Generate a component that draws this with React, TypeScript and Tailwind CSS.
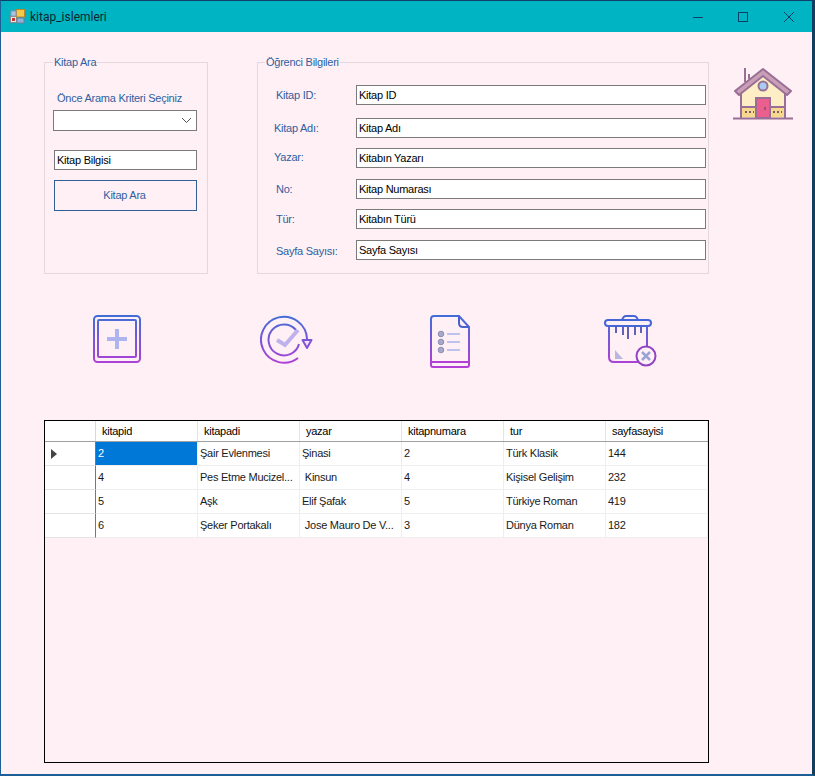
const columns = ['kitapid', 'kitapadi', 'yazar', 'kitapnumara', 'tur', 'sayfasayisi']

const rows = [
  ['2', 'Şair Evlenmesi', 'Şinasi', '2', 'Türk Klasik', '144'],
  ['4', 'Pes Etme Mucizel...', ' Kinsun', '4', 'Kişisel Gelişim', '232'],
  ['5', 'Aşk', 'Elif Şafak', '5', 'Türkiye Roman', '419'],
  ['6', 'Şeker Portakalı', ' Jose Mauro De V...', '3', 'Dünya Roman', '182'],
]

const fields = [
  { label: 'Kitap ID:', value: 'Kitap ID', labelClass: 'pl-[18px]', rowClass: 'mt-[16px]' },
  { label: 'Kitap Adı:', value: 'Kitap Adı', labelClass: 'pl-[16px]', rowClass: 'mt-[13px]' },
  { label: 'Yazar:', value: 'Kitabın Yazarı', labelClass: 'pl-[16px] mt-[-2px]', rowClass: 'mt-[10px]' },
  { label: 'No:', value: 'Kitap Numarası', labelClass: 'pl-[18px]', rowClass: 'mt-[11px]' },
  { label: 'Tür:', value: 'Kitabın Türü', labelClass: 'pl-[18px]', rowClass: 'mt-[10px]' },
  { label: 'Sayfa Sayısı:', value: 'Sayfa Sayısı', labelClass: 'pl-[18px] mt-[2px]', rowClass: 'mt-[11px]' },
]

function Gradient({ id }: { id: string }) {
  return (
    <linearGradient id={id} gradientUnits="userSpaceOnUse" x1="0" y1="0" x2="0" y2="50">
      <stop offset="0" stopColor="#3f6fd8" />
      <stop offset="1" stopColor="#b23fd6" />
    </linearGradient>
  )
}

function AppIcon() {
  return (
    <svg width="15" height="15" viewBox="0 0 15 15" className="shrink-0">
      <rect x="0.5" y="7.5" width="6" height="6" fill="#e8e8e8" stroke="#8a8a8a" />
      <rect x="2" y="9" width="3" height="3" fill="#c8332e" />
      <rect x="6.5" y="0.5" width="8" height="7.5" fill="#f7c948" stroke="#b8862b" />
      <rect x="7" y="9" width="7" height="5" fill="#8fb4dc" stroke="#6c7f96" />
      <rect x="1" y="2" width="5" height="5" fill="#a9c6e4" stroke="#8a9aa8" />
    </svg>
  )
}

function WindowButtons() {
  return (
    <div className="flex items-center">
      <svg width="12" height="12" viewBox="0 0 12 12" className="mr-[33px]">
        <path d="M1 6.500H11" stroke="#0d3f66" strokeWidth="1" />
      </svg>
      <svg width="12" height="12" viewBox="0 0 12 12" className="mr-[34px]">
        <rect x="1.500" y="1.500" width="9" height="9" fill="none" stroke="#0d3f66" />
      </svg>
      <svg width="12" height="12" viewBox="0 0 12 12" className="mr-[17px]">
        <path d="M1 1L11 11M11 1L1 11" stroke="#0d3f66" strokeWidth="1" />
      </svg>
    </div>
  )
}

function HouseIcon() {
  return (
    <svg width="60" height="54" viewBox="0 0 60 54" className="shrink-0">
      <path d="M12 16V2M16 13V8" stroke="#9a6f95" strokeWidth="2" />
      <path d="M8 22L30 4L52 22V52H8Z" fill="#fdeec6" />
      <path d="M8 42H52V51H8Z" fill="#f6d98c" />
      <path d="M2 25L30 3L58 25L54 29L30 10L6 29Z" fill="#c99fb8" stroke="#9a6f95" strokeWidth="2" strokeLinejoin="round" />
      <path d="M8 27V52M52 27V52M8 41H52" stroke="#9a6f95" strokeWidth="2" />
      <circle cx="30" cy="20" r="4.500" fill="#a9cdf0" stroke="#9a6f95" strokeWidth="2" />
      <rect x="23" y="32" width="14" height="20" fill="#ea5f8d" stroke="#9a6f95" strokeWidth="2" />
      <path d="M32 41V44" stroke="#8a4a6f" strokeWidth="1.500" />
      <path d="M12 46H14M16 46H18M20 46H21M40 46H42M44 46H46M48 46H49" stroke="#7a5a70" strokeWidth="2" />
      <path d="M0 52.500H60" stroke="#9a6f95" strokeWidth="2" />
    </svg>
  )
}

function AddIcon() {
  return (
    <svg width="48" height="48" viewBox="0 0 48 48" className="shrink-0">
      <defs><Gradient id="add" /></defs>
      <rect x="1" y="1" width="46" height="46" rx="3.500" fill="none" stroke="url(#add)" strokeWidth="2" />
      <rect x="5" y="5" width="38" height="37" rx="1" fill="none" stroke="url(#add)" strokeWidth="2" />
      <path d="M24 14V34M14 24H34" stroke="#aeb4ee" strokeWidth="4" />
    </svg>
  )
}

function UpdateIcon() {
  return (
    <svg width="54" height="50" viewBox="0 0 54 50" className="shrink-0">
      <defs><Gradient id="upd" /></defs>
      <path d="M47 24A23 23 0 1 0 38 43" fill="none" stroke="url(#upd)" strokeWidth="2" />
      <path d="M36 15A15.500 15.500 0 1 0 39 29" fill="none" stroke="url(#upd)" strokeWidth="2" />
      <path d="M42.500 25H51.500L47 33Z" fill="#f6e0f4" stroke="url(#upd)" strokeWidth="2" strokeLinejoin="round" />
      <path d="M17 25L25 30L38 15" fill="none" stroke="#bfb2ec" strokeWidth="4" />
    </svg>
  )
}

function ListIcon() {
  return (
    <svg width="40" height="53" viewBox="0 0 40 53" className="shrink-0">
      <defs><Gradient id="lst" /></defs>
      <path d="M1 4C1 2 2 1 4 1H29L39 12V50C39 51 38 52 37 52H3C2 52 1 51 1 50Z" fill="none" stroke="url(#lst)" strokeWidth="2" />
      <path d="M29 1V8C29 10 30 12 33 12H39" fill="none" stroke="#4a5fd0" strokeWidth="2" />
      <path d="M1 47H39" stroke="#b23fd6" strokeWidth="2" />
      <circle cx="11" cy="19" r="2.800" fill="#a8a8c8" stroke="#8d8db5" />
      <circle cx="11" cy="27" r="2.800" fill="#a8a8c8" stroke="#8d8db5" />
      <circle cx="11" cy="35" r="2.800" fill="#a8a8c8" stroke="#8d8db5" />
      <path d="M17 19H30M17 27H30M17 35H30" stroke="#a9b4ea" strokeWidth="1.500" />
    </svg>
  )
}

function TrashIcon() {
  return (
    <svg width="54" height="52" viewBox="0 0 54 52" className="shrink-0">
      <defs><Gradient id="trs" /></defs>
      <path d="M18 5C19 2 20 1 22 1H30C32 1 33 2 34 5" fill="none" stroke="#4566d6" strokeWidth="2" />
      <rect x="1" y="5" width="46" height="6" rx="3" fill="none" stroke="#4566d6" strokeWidth="2" />
      <path d="M5 11V42C5 45 7 47 10 47H36M43 11V32" fill="none" stroke="url(#trs)" strokeWidth="2" />
      <path d="M12 12V18M19 12V20M24 12V24M31 12V20M37 12V18" stroke="#5f62b8" strokeWidth="2" />
      <path d="M11 35L19 44H11Z" fill="#b9b7dd" />
      <circle cx="42" cy="41" r="9.500" fill="#fff0f5" stroke="#8f44c4" strokeWidth="2" />
      <path d="M38 37L46 45M46 37L38 45" stroke="#9aa2d8" strokeWidth="2.500" />
    </svg>
  )
}

function KitapAra() {
  return (
    <fieldset className="w-[164px] h-[218px] border border-[#e3d8e0] mt-[-6px]">
      <legend className="ml-[8px] px-[1px] text-[11px] leading-[13px] tracking-[-0.25px] text-[#2f5f9e]">Kitap Ara</legend>
      <p className="ml-[12px] mt-[23px] text-[11px] leading-[13px] tracking-[-0.25px] text-[#2f5f9e]">Önce Arama Kriteri Seçiniz</p>
      <div className="ml-[8px] mt-[5px] w-[144px] h-[21px] flex items-center justify-end pr-[4px] bg-white border border-[#7a7a7a]">
        <svg width="11" height="7" viewBox="0 0 11 7">
          <path d="M1 1L5.500 5.500L10 1" fill="none" stroke="#555" />
        </svg>
      </div>
      <div className="ml-[9px] mt-[19px] w-[143px] h-[20px] flex items-center px-[2px] bg-white border border-[#7a7a7a] text-[11px] tracking-[-0.25px] text-black">
        Kitap Bilgisi
      </div>
      <button className="block ml-[9px] mt-[10px] w-[143px] h-[31px] pr-[2px] border border-[#2f5f95] text-[11px] tracking-[-0.25px] text-[#2f5f9e]">
        Kitap Ara
      </button>
    </fieldset>
  )
}

function OgrenciBilgileri() {
  return (
    <fieldset className="w-[452px] h-[218px] border border-[#e3d8e0] mt-[-6px] ml-[49px]">
      <legend className="ml-[7px] px-[1px] text-[11px] leading-[13px] tracking-[-0.25px] text-[#2f5f9e]">Öğrenci Bilgileri</legend>
      {fields.map((field) => (
        <div key={field.label} className={`flex items-center h-[20px] ${field.rowClass}`}>
          <span className={`w-[98px] shrink-0 text-[11px] leading-[13px] tracking-[-0.25px] text-[#2f5f9e] ${field.labelClass}`}>{field.label}</span>
          <div className="w-[350px] h-[20px] flex items-center px-[2px] bg-white border border-[#7a7a7a] text-[11px] tracking-[-0.25px] text-black">
            {field.value}
          </div>
        </div>
      ))}
    </fieldset>
  )
}

function BooksGrid() {
  return (
    <div className="ml-[43px] mt-[52px] w-[665px] h-[343px] shrink-0 border border-black">
      <div className="grid grid-cols-[51px_repeat(6,102px)] h-[21px] bg-white border-b border-[#a0a0a0] text-[11px] tracking-[-0.25px] text-black">
        <div className="border-r border-[#d8d8d8]" />
        {columns.map((col) => (
          <div key={col} className="flex items-center pl-[6px] border-r border-[#e4e4e4]">{col}</div>
        ))}
      </div>
      {rows.map((row, i) => (
        <div key={row[0]} className="grid grid-cols-[51px_repeat(6,102px)] h-[24px] bg-white text-[11px] tracking-[-0.25px] text-[#1a1a1a]">
          <div className="flex items-center pl-[6px] border-r border-b border-r-[#777] border-b-[#e4e4e4]">
            {i === 0 && (
              <svg width="6" height="10" viewBox="0 0 6 10">
                <path d="M0 0L6 5L0 10Z" fill="#444" />
              </svg>
            )}
          </div>
          {row.map((cell, j) => (
            <div
              key={j}
              className={`flex items-center pl-[2px] whitespace-pre border-r border-b border-[#eeeeee] ${
                i === 0 && j === 0 ? 'bg-[#0078d7] text-white' : ''
              }`}
            >
              {cell}
            </div>
          ))}
        </div>
      ))}
    </div>
  )
}

export default function App() {
  return (
    <div className="w-[815px] h-[776px] flex flex-col overflow-hidden border border-b-2 border-[#1c5f96] border-t-[#123f6a] border-r-[3px] border-r-[#143c5c] bg-[#fff0f5] [font-family:'Liberation_Sans',Arial,sans-serif]">
      <div className="flex items-center h-[31px] shrink-0 bg-[#00b4c4] pl-[9px]">
        <AppIcon />
        <span className="ml-[5px] text-[12px] text-[#10262e] [font-family:Roboto,sans-serif]">kitap_islemleri</span>
        <div className="ml-auto">
          <WindowButtons />
        </div>
      </div>
      <div className="flex items-start ml-[43px] mt-[30px]">
        <KitapAra />
        <OgrenciBilgileri />
        <div className="ml-[24px] mt-[4px]">
          <HouseIcon />
        </div>
      </div>
      <div className="flex items-start ml-[92px] mt-[41px] h-[53px]">
        <AddIcon />
        <div className="ml-[119px]"><UpdateIcon /></div>
        <div className="ml-[116px]"><ListIcon /></div>
        <div className="ml-[134px]"><TrashIcon /></div>
      </div>
      <BooksGrid />
    </div>
  )
}
